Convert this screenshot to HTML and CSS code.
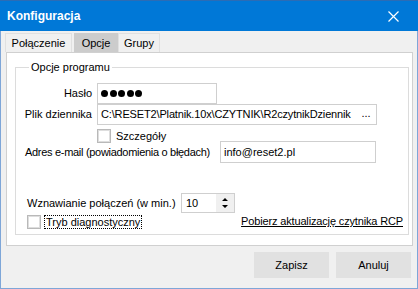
FILE: index.html
```html
<!doctype html>
<html lang="pl">
<head>
    <meta charset="utf-8"/>
    <title>Konfiguracja</title>
    <link rel="stylesheet" href="styles.css">
</head>
<body>
<div class="window">
    <div class="titlebar">
        <span class="title">Konfiguracja</span>
        <svg class="close" width="11" height="11" viewBox="0 0 11 11">
            <path d="M0.5 0.5 L10.5 10.5 M10.5 0.5 L0.5 10.5" stroke="#fff" stroke-width="1.2"/>
        </svg>
    </div>
    <div class="client">
        <ul class="tabs">
            <li class="tab">Połączenie</li>
            <li class="tab current">Opcje</li>
            <li class="tab">Grupy</li>
        </ul>
        <div class="panel">
            <fieldset class="group">
                <legend>Opcje programu</legend>

                <div class="row row-haslo">
                    <label class="lbl">Hasło</label>
                    <div class="field field-haslo">
                        <i class="dot"></i><i class="dot"></i><i class="dot"></i><i class="dot"></i><i class="dot"></i>
                    </div>
                </div>

                <div class="row row-plik">
                    <label class="lbl">Plik dziennika</label>
                    <div class="field field-plik">
                        <span class="path">C:\RESET2\Platnik.10x\CZYTNIK\R2czytnikDziennik</span>
                        <span class="browse">...</span>
                    </div>
                </div>

                <div class="row row-check">
                    <span class="check"></span>
                    <span class="check-text">Szczegóły</span>
                </div>

                <div class="row row-email">
                    <label class="lbl-email">Adres e-mail (powiadomienia o błędach)</label>
                    <div class="field field-email">info@reset2.pl</div>
                </div>

                <div class="row row-spin">
                    <label class="lbl-spin">Wznawianie połączeń (w min.)</label>
                    <div class="field field-spin">
                        <span class="spin-val">10</span>
                        <span class="spin-btns">
                            <svg width="8" height="14" viewBox="0 0 8 14">
                                <path d="M4 2 L7 5 L1 5 Z M1 9 L7 9 L4 12 Z" fill="#000"/>
                            </svg>
                        </span>
                    </div>
                </div>

                <div class="row row-diag">
                    <span class="check"></span>
                    <span class="check-text focus">Tryb diagnostyczny</span>
                    <a class="link" href="#">Pobierz aktualizację czytnika RCP</a>
                </div>
            </fieldset>
        </div>
        <div class="buttons">
            <button class="btn">Zapisz</button>
            <button class="btn">Anuluj</button>
        </div>
    </div>
</div>
</body>
</html>
```

FILE: styles.css
```css
body, ul, li, fieldset, legend {
    margin: 0;
    padding: 0;
    list-style: none;
}

body {
    font: 11px/13px "Liberation Sans", Arial, sans-serif;
    color: #000;
    background: #f0f0f0;
}

.window {
    width: 418px;
    height: 289px;
    display: flex;
    flex-direction: column;
}

.titlebar {
    height: 31px;
    flex: none;
    background: #0078d7;
    border-top: 1px solid #2b6cb5;
    box-sizing: border-box;
    display: flex;
    align-items: center;
    justify-content: space-between;
    padding: 0 19px 0 7px;
}

.title {
    font: bold 12px "Liberation Sans", Arial, sans-serif;
    color: #fff;
}

.close {
    display: block;
}

.client {
    flex: 1;
    border: 1px solid #7ea6d8;
    border-top: none;
    padding: 2px 0 0 4px;
}

.tabs {
    display: flex;
    height: 19px;
}

.tab {
    padding: 3px 0 0;
    box-sizing: border-box;
    text-align: center;
    border: 1px solid #e0e0e0;
    border-bottom: none;
    background: #f0f0f0;
}

.tab:nth-child(1) {
    width: 67px;
}

.tab:nth-child(2) {
    width: 44px;
    margin-left: 2px;
}

.tab:nth-child(3) {
    width: 42px;
}

.tab.current {
    background: #cccccc;
    border-color: #cccccc;
}

.panel {
    margin-left: 1px;
    width: 407px;
    height: 194px;
    box-sizing: border-box;
    border: 1px solid #d0d0d0;
    background: #fff;
    padding: 8px 0 0 8px;
}

.group {
    width: 394px;
    height: 174px;
    box-sizing: border-box;
    border: 1px solid #dcdcdc;
}

.group legend {
    margin-left: 13px;
    padding: 0 2px;
    line-height: 13px;
}

.row {
    display: flex;
    align-items: center;
}

.field {
    box-sizing: border-box;
    border: 1px solid #cfcfcf;
    background: #fff;
    display: flex;
    align-items: center;
    padding: 0 3px;
    white-space: nowrap;
    overflow: hidden;
}

.lbl {
    width: 76px;
    text-align: right;
    margin-right: 5px;
}

.row-haslo {
    margin-top: 9px;
    height: 21px;
}

.field-haslo {
    width: 120px;
    height: 21px;
    gap: 1.5px;
}

.dot {
    width: 7px;
    height: 7px;
    border-radius: 50%;
    background: #000;
}

.row-plik {
    height: 21px;
}

.field-plik {
    width: 280px;
    height: 21px;
    padding-right: 0;
}

.path {
    flex: 1;
    overflow: hidden;
    letter-spacing: -0.15px;
}

.browse {
    width: 20px;
    text-align: center;
    padding-bottom: 2px;
}

.row-check {
    margin-top: 4px;
    height: 14px;
    padding-left: 81px;
}

.check {
    width: 14px;
    height: 14px;
    box-sizing: border-box;
    border: 1px solid #b9b9b9;
    box-shadow: inset 0 0 0 1px #dedede;
    background: #fff;
    flex: none;
}

.check-text {
    margin-left: 5px;
}

.row-email {
    margin-top: -2px;
    height: 22px;
    padding-left: 9px;
}

.lbl-email {
    width: 195px;
    white-space: nowrap;
    letter-spacing: -0.3px;
}

.field-email {
    width: 156px;
    height: 22px;
}

.row-spin {
    margin-top: 30px;
    height: 20px;
    padding-left: 11px;
}

.lbl-spin {
    width: 154px;
    white-space: nowrap;
}

.field-spin {
    width: 54px;
    height: 20px;
    padding: 0 0 0 4px;
}

.spin-val {
    flex: 1;
}

.spin-btns {
    width: 18px;
    height: 18px;
    background: #f0f0f0;
    display: flex;
    align-items: center;
    justify-content: center;
}

.spin-btns svg {
    display: block;
}

.row-diag {
    margin-top: 1px;
    height: 15px;
    padding-left: 11px;
    padding-right: 5px;
}

.focus {
    margin-left: 3px;
    padding: 0 1px;
    border: 1px dotted #000;
    line-height: 12px;
}

.link {
    margin-left: auto;
    color: #000;
    text-decoration: underline;
    letter-spacing: -0.15px;
}

.buttons {
    display: flex;
    justify-content: flex-end;
    gap: 7px;
    margin-top: 6px;
    padding-right: 6px;
}

.btn {
    width: 75px;
    height: 26px;
    font: 11px "Liberation Sans", Arial, sans-serif;
    color: #000;
    background: #e1e1e1;
    border: 1px solid #e1e1e1;
    padding: 0;
}
```
